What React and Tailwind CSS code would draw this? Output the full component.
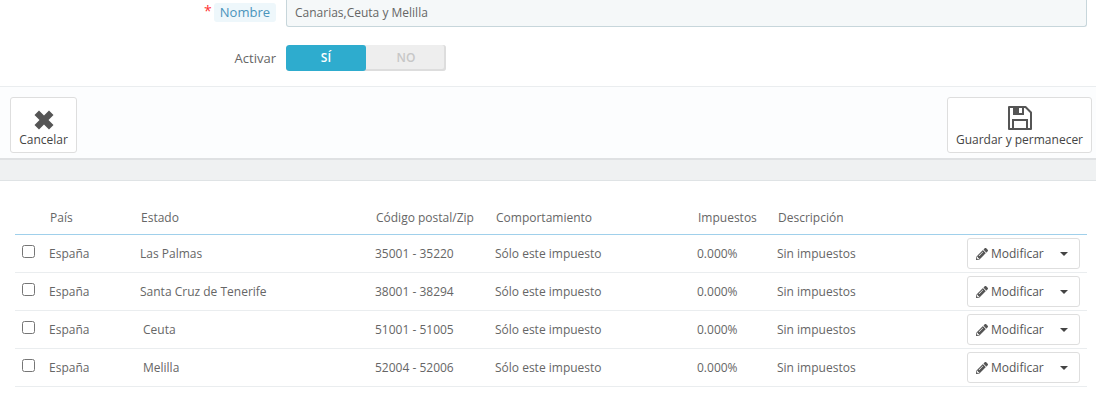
import React from "react";
import { FaPencilAlt } from "react-icons/fa";

const rows = [
  { estado: "Las Palmas", zip: "35001 - 35220", indent: "" },
  { estado: "Santa Cruz de Tenerife", zip: "38001 - 38294", indent: "" },
  { estado: "Ceuta", zip: "51001 - 51005", indent: "pl-[3px]" },
  { estado: "Melilla", zip: "52004 - 52006", indent: "pl-[3px]" },
];

const App = () => {
  return (
    <div className="w-[1096px] h-[401px] overflow-hidden bg-white text-[12px] text-[#666] font-['Open_Sans',sans-serif]">
      {/* Form */}
      <div className="h-[86px] flex flex-col">
        <div className="h-[27px] flex">
          <div className="w-[276px] flex justify-end items-start gap-[2px] pt-[3px]">
            <span className="text-[#f33] text-[14px] leading-[14px] mt-[1px]">*</span>
            <span className="h-[19px] px-[6px] rounded-[3px] bg-[#eef7fb] text-[#4a94bc] text-[13px] leading-[19px]">
              Nombre
            </span>
          </div>
          <div className="ml-[10px] w-[801px] h-[27px] bg-[#f5f8f9] border border-t-0 border-[#c7d6db] rounded-b-[3px] px-[8px] leading-[25px] text-[#666]">
            Canarias,Ceuta y Melilla
          </div>
        </div>
        <div className="flex mt-[18px]">
          <div className="w-[276px] text-right text-[#666] text-[13px] leading-[26px]">Activar</div>
          <div className="ml-[10px] w-[160px] h-[26px] flex rounded-[3px] overflow-hidden bg-[#eee] shadow-[inset_-1px_-1px_0_1px_#ddd] font-semibold">
            <div className="w-[80px] h-[26px] bg-[#2eacce] text-white text-center leading-[25px] rounded-[3px]">SÍ</div>
            <div className="flex-1 text-center text-[#c7c7c7] leading-[25px]">NO</div>
          </div>
        </div>
      </div>

      {/* Toolbar */}
      <div className="h-[74px] bg-[#fcfdfe] border-t border-t-[#eaedef] border-b-2 border-b-[#dfe1e3] pr-[4px] pt-[10px] pl-[10px] flex justify-between items-start">
        <button className="w-[67px] h-[56px] bg-white border border-[#dedede] rounded-[3px] flex flex-col items-center text-[#444]">
          <svg className="mt-[12px]" width="20" height="20" viewBox="0 0 20 20">
            <path d="M5 0.5 L10 5.5 L15 0.5 L19.5 5 L14.5 10 L19.5 15 L15 19.5 L10 14.5 L5 19.5 L0.5 15 L5.5 10 L0.5 5 Z" fill="#555" />
          </svg>
          <span className="leading-[16px] mt-[2px]">Cancelar</span>
        </button>
        <button className="w-[145px] h-[56px] bg-white border border-[#dedede] rounded-[3px] flex flex-col items-center text-[#444]">
          <svg className="mt-[8px]" width="24" height="24" viewBox="0 0 24 24">
            <path d="M1 1 H17.5 L23 6.5 V23 H1 Z" fill="none" stroke="#555" strokeWidth="2" strokeLinejoin="round" />
            <rect x="5" y="1" width="11" height="8" fill="#555" />
            <rect x="11" y="2" width="3" height="5" fill="#fff" />
            <rect x="5" y="14" width="14" height="9" fill="none" stroke="#555" strokeWidth="2" />
          </svg>
          <span className="leading-[16px] mt-[2px]">Guardar y permanecer</span>
        </button>
      </div>

      {/* Gray band */}
      <div className="h-[21px] bg-[#eff1f2] border-b border-b-[#dfe3e5]" />

      {/* Table */}
      <div className="ml-[15px] w-[1072px] mt-[23px]">
        <div className="h-[31px] flex items-start pl-[35px] border-b border-b-[#a0d0eb] text-[#666] leading-[28px]">
          <div className="w-[91px]">País</div>
          <div className="w-[235px]">Estado</div>
          <div className="w-[120px]">Código postal/Zip</div>
          <div className="w-[202px]">Comportamiento</div>
          <div className="w-[80px]">Impuestos</div>
          <div>Descripción</div>
        </div>
        {rows.map((row) => (
          <div key={row.zip} className="h-[38px] flex items-center border-b border-b-[#eaedef]">
            <div className="w-[34px] pl-[7px]">
              <input type="checkbox" className="block w-[13px] h-[13px] -mt-[4px] appearance-none border border-[#767676] rounded-[2.5px] bg-white" />
            </div>
            <div className="w-[91px]">España</div>
            <div className={`w-[235px] ${row.indent}`}>{row.estado}</div>
            <div className="w-[120px]">{row.zip}</div>
            <div className="w-[202px]">Sólo este impuesto</div>
            <div className="w-[80px]">0.000%</div>
            <div className="w-[190px]">Sin impuestos</div>
            <button className="w-[113px] h-[31px] bg-white border border-[#dedede] rounded-[3px] flex items-center pl-[8px] text-[#555]">
              <FaPencilAlt className="w-[12px] h-[12px] text-[#555]" />
              <span className="ml-[3px]">Modificar</span>
              <svg className="ml-[16px]" width="8" height="4" viewBox="0 0 8 4">
                <path d="M0 0 H8 L4 4 Z" fill="#444" />
              </svg>
            </button>
          </div>
        ))}
      </div>
    </div>
  );
};

export default App;
